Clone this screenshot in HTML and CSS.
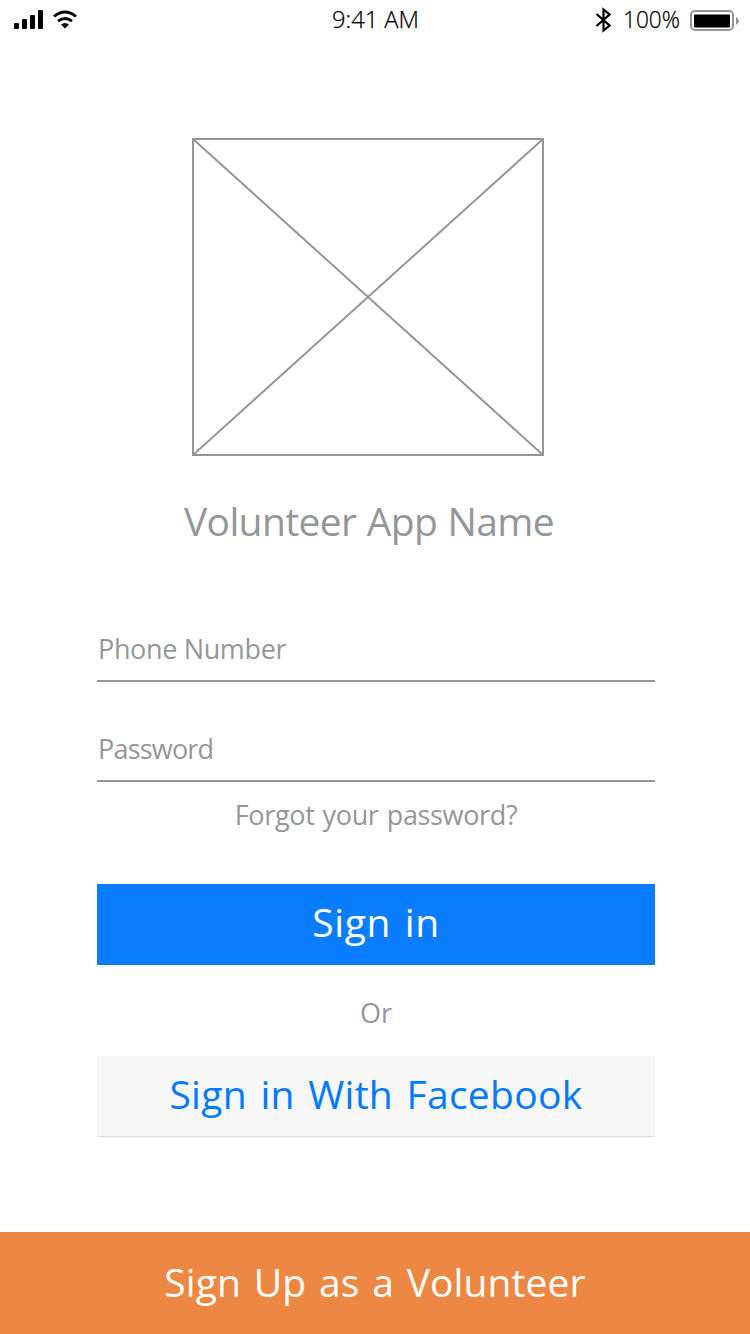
FILE: index.html
```html
<!DOCTYPE html>
<html lang="en">
<head>
<meta charset="utf-8">
<title>Volunteer sign in</title>
<link rel="stylesheet" href="styles.css">
</head>
<body>
<div class="screen">
  <header class="status">
    <div class="status-left">
      <svg class="signal" width="30" height="20" viewBox="0 0 30 20"><rect y="13" width="5" height="6" rx="1"/><rect x="8" y="9" width="5" height="10" rx="1"/><rect x="16" y="5" width="5" height="14" rx="1"/><rect x="24" width="5" height="19" rx="1"/></svg>
      <svg class="wifi" width="24" height="20" viewBox="0 0 24 20" fill="none" stroke="#000" stroke-width="2.9"><path d="M1 6.500Q12-2.500 23 6.500M5 11.200Q12 6 19 11.200"/><path d="M8 14.500Q12 11.500 16 14.500L12 18.500z" fill="#000" stroke="none"/></svg>
    </div>
    <time class="clock"><svg width="88" height="40"><text x="0" y="28" textLength="87" lengthAdjust="spacingAndGlyphs">9:41 AM</text></svg></time>
    <div class="status-right">
      <svg class="bluetooth" width="16" height="26" viewBox="0 0 16 26" fill="none" stroke="#000" stroke-width="2.2"><path d="M1.500 7l13 11.500-6 5V2.500l6 5L1.500 19"/></svg>
      <svg class="percent" width="58" height="40"><text x="0" y="28" textLength="57" lengthAdjust="spacingAndGlyphs">100%</text></svg>
      <svg class="battery" width="50" height="22" viewBox="0 0 50 22"><rect x="1" y="1" width="42" height="19" rx="4" fill="none" stroke="#939598" stroke-width="2"/><rect x="4" y="4.500" width="36" height="13" rx="1"/><path d="M46 7q3 1.500 3 4t-3 4z" fill="#939598"/></svg>
    </div>
  </header>
  <main class="login">
    <svg class="logo" width="352" height="318" viewBox="0 0 352 318" fill="none" stroke="#939799" stroke-width="2"><path d="M1 1h350v316H1zL351 317M351 1L1 317"/></svg>
    <h1 class="title">Volunteer App Name</h1>
    <form class="form">
      <div class="field phone">Phone Number</div>
      <div class="field password">Password</div>
      <a class="forgot">Forgot your password?</a>
      <button type="button" class="button primary">Sign in</button>
      <p class="or">Or</p>
      <button type="button" class="button facebook">Sign in With Facebook</button>
    </form>
  </main>
  <footer class="signup">Sign Up as a Volunteer</footer>
</div>
</body>
</html>
```
FILE: styles.css
```css
* { box-sizing: border-box; }
body { margin: 0; background: #fff; font-family: "Open Sans", "Noto Sans", sans-serif; color: #939799; }
.screen { width: 750px; height: 1334px; display: flex; flex-direction: column; }
.status { height: 40px; display: grid; grid-template-columns: 332px 88px 1fr; color: #000; }
.status svg { display: block; }
.status text { font-family: "Open Sans", "Noto Sans", sans-serif; font-size: 23px; font-weight: 350; stroke: #000; stroke-width: 0.25px; }
.status-left { display: flex; align-items: center; padding-left: 14px; gap: 9px; }
.status-right { display: flex; align-items: center; padding-left: 175px; }
.percent { margin-left: 12px; }
.battery { margin: 1px 0 0 9px; }
.login { flex: 1; display: flex; flex-direction: column; padding: 98px 95px 0 97px; }
.logo { margin-left: 95px; }
.title { margin: 35px 0 0 87px; font-size: 39px; line-height: 60px; font-weight: 400; letter-spacing: -0.65px; word-spacing: 1px; white-space: nowrap; }
.form { display: flex; flex-direction: column; margin-top: 73px; }
.field { height: 58px; padding-left: 1px; border-bottom: 2px solid #939799; font-size: 27px; line-height: 49px; letter-spacing: -0.35px; }
.password { margin-top: 42px; letter-spacing: -0.8px; }
.forgot { margin-top: 15px; text-align: center; font-size: 27px; line-height: 36px; letter-spacing: -0.35px; word-spacing: 1.5px; }
.button { height: 81px; border: 0; padding: 0 0 5px; font: inherit; font-size: 39px; line-height: 76px; letter-spacing: 0.3px; word-spacing: 3px; }
.primary { margin-top: 51px; background: #0a7eff; color: #fff; border-bottom: 1px solid #0b76e8; letter-spacing: 0.6px; }
.or { margin: 29px 0 0; text-align: center; font-size: 27px; line-height: 37px; }
.facebook { margin-top: 25px; background: #f7f7f7; color: #007aff; border-bottom: 1px solid #dcdcdc; }
.signup { height: 102px; background: #ed8844; color: #fff; text-align: center; font-size: 39px; line-height: 99px; letter-spacing: 0.1px; word-spacing: 2.5px; }
```
